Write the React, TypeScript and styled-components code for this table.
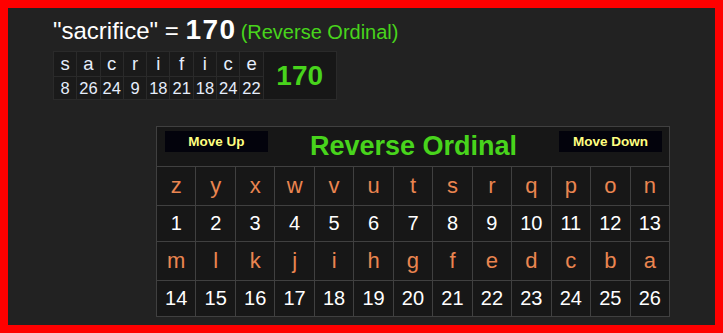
import React from "react";
import styled, { createGlobalStyle } from "styled-components";

const Global = createGlobalStyle`
  html, body { margin: 0; padding: 0; }
  body {
    background: #ff0000;
    padding: 8px;
    font-family: "Liberation Sans", Arial, sans-serif;
  }
`;

const Frame = styled.div`
  background: #222222;
  height: 317px;
  box-sizing: border-box;
  padding: 8px 0 0 45px;
`;

const Heading = styled.div`
  display: flex;
  align-items: baseline;
  color: #ffffff;
  font-size: 24px;
  line-height: 28px;
  white-space: pre;
`;

const BigSum = styled.span`
  font-weight: bold;
  font-size: 28px;
  letter-spacing: 1.5px;
`;

const CipherName = styled.span`
  color: #48d41c;
  font-size: 20px;
  margin-left: 4px;
`;

const WordTable = styled.div`
  display: inline-flex;
  margin-top: 5px;
  background: #1a1a1a;
  border-top: 1px solid #2a2a2a;
  border-left: 1px solid #2a2a2a;
`;

const LetterCol = styled.div`
  display: flex;
  flex-direction: column;
  border-right: 1px solid #2a2a2a;
`;

const WordCell = styled.div<{ $top?: boolean }>`
  width: 22.3px;
  text-align: center;
  color: #e6eefc;
  font-size: ${(p) => (p.$top ? "18.5px" : "16.5px")};
  height: ${(p) => (p.$top ? "24px" : "22px")};
  line-height: ${(p) => (p.$top ? "24px" : "22px")};
  border-bottom: 1px solid #2a2a2a;
`;

const TotalCell = styled.div`
  width: 72px;
  display: flex;
  align-items: center;
  justify-content: center;
  color: #48d41c;
  font-weight: bold;
  font-size: 28px;
  background: #171717;
  border-bottom: 1px solid #2a2a2a;
  border-right: 1px solid #2a2a2a;
`;

const Chart = styled.div`
  margin: 26px 0 0 103px;
  width: 513px;
  border-top: 1px solid #404040;
  border-left: 1px solid #404040;
  background: #171717;
`;

const ChartHeader = styled.div`
  display: flex;
  justify-content: space-between;
  align-items: flex-start;
  height: 40px;
  padding: 4px 7px 0 8px;
  box-sizing: border-box;
  border-right: 1px solid #404040;
  border-bottom: 1px solid #404040;
`;

const MoveButton = styled.div`
  width: 103px;
  height: 21px;
  background: #03030c;
  color: #ffff80;
  font-weight: bold;
  font-size: 13.5px;
  line-height: 21px;
  text-align: center;
`;

const ChartTitle = styled.div`
  color: #48d41c;
  font-weight: bold;
  font-size: 27px;
  line-height: 32px;
  margin-top: -1px;
`;

const Grid = styled.div`
  display: grid;
  grid-template-columns: repeat(13, 1fr);
`;

const Cell = styled.div<{ $letter?: boolean }>`
  height: ${(p) => (p.$letter ? "38px" : "35px")};
  line-height: ${(p) => (p.$letter ? "38px" : "35px")};
  text-align: center;
  color: ${(p) => (p.$letter ? "#ea8550" : "#ffffff")};
  font-size: ${(p) => (p.$letter ? "22px" : "20px")};
  border-right: 1px solid #404040;
  border-bottom: 1px solid #404040;
`;

const word = [
  ["s", 8],
  ["a", 26],
  ["c", 24],
  ["r", 9],
  ["i", 18],
  ["f", 21],
  ["i", 18],
  ["c", 24],
  ["e", 22],
] as const;

const alphabet = "zyxwvutsrqponmlkjihgfedcba".split("");

export default function App() {
  const rows = [alphabet.slice(0, 13), alphabet.slice(13)];
  return (
    <>
      <Global />
      <Frame>
        <Heading>
          <span>"sacrifice" = </span>
          <BigSum>170</BigSum>
          <CipherName>(Reverse Ordinal)</CipherName>
        </Heading>
        <WordTable>
          {word.map(([l, n], i) => (
            <LetterCol key={i}>
              <WordCell $top>{l}</WordCell>
              <WordCell>{n}</WordCell>
            </LetterCol>
          ))}
          <TotalCell>170</TotalCell>
        </WordTable>
        <Chart>
          <ChartHeader>
            <MoveButton>Move Up</MoveButton>
            <ChartTitle>Reverse Ordinal</ChartTitle>
            <MoveButton>Move Down</MoveButton>
          </ChartHeader>
          <Grid>
            {rows.map((row, r) => (
              <React.Fragment key={r}>
                {row.map((l) => (
                  <Cell $letter key={l}>
                    {l}
                  </Cell>
                ))}
                {row.map((_, i) => (
                  <Cell key={"n" + i}>{r * 13 + i + 1}</Cell>
                ))}
              </React.Fragment>
            ))}
          </Grid>
        </Chart>
      </Frame>
    </>
  );
}
